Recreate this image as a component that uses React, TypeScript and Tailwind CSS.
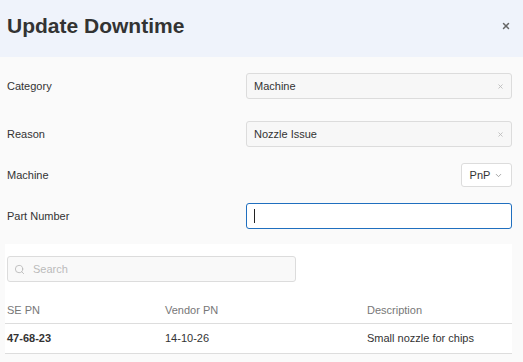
import React from "react";
import { X, Search, ChevronDown } from "lucide-react";

const font = { fontFamily: '"Liberation Sans", Arial, sans-serif' };

const Row: React.FC<{ label: string; children: React.ReactNode; h: string }> = ({ label, children, h }) => (
  <div className={`flex items-center ${h}`}>
    <div className="w-[239px] pl-[7px] text-[11px] text-[#333]">{label}</div>
    <div className="flex-1 flex justify-end pr-[11px]">{children}</div>
  </div>
);

const App: React.FC = () => {
  return (
    <div className="w-[523px] h-[362px] bg-[#fafafa] overflow-hidden" style={font}>
      {/* Header */}
      <div className="h-[57px] bg-[#eff3fb] flex items-center justify-between pl-[7px] pr-[12px]">
        <h1 className="text-[21px] font-bold text-[#333] -mt-[6px]">Update Downtime</h1>
        <X className="w-[10px] h-[10px] text-[#666] -mt-[6px]" strokeWidth={3.5} />
      </div>

      {/* Form */}
      <div className="pt-[16px]">
        <Row label="Category" h="h-[26px]">
          <div className="w-[266px] h-[26px] bg-[#f7f7f7] border border-[#dcdcdc] rounded-[3px] flex items-center justify-between px-[7px] text-[11px] text-[#333]">
            <span>Machine</span>
            <X className="w-[7px] h-[7px] text-[#bbb]" strokeWidth={3} />
          </div>
        </Row>
        <div className="h-[22px]" />
        <Row label="Reason" h="h-[26px]">
          <div className="w-[266px] h-[26px] bg-[#f7f7f7] border border-[#dcdcdc] rounded-[3px] flex items-center justify-between px-[7px] text-[11px] text-[#333]">
            <span>Nozzle Issue</span>
            <X className="w-[7px] h-[7px] text-[#bbb]" strokeWidth={3} />
          </div>
        </Row>
        <div className="h-[16px]" />
        <Row label="Machine" h="h-[24px]">
          <div className="w-[51px] h-[24px] bg-white border border-[#dcdcdc] rounded-[3px] flex items-center justify-center gap-[4px] text-[11px] text-[#333]">
            <span>PnP</span>
            <ChevronDown className="w-[9px] h-[9px] text-[#888]" strokeWidth={2} />
          </div>
        </Row>
        <div className="h-[16px]" />
        <Row label="Part Number" h="h-[26px]">
          <div className="w-[266px] h-[26px] bg-white border border-[#1f6fbf] rounded-[3px] flex items-center px-[7px]">
            <div className="w-px h-[14px] bg-[#222]" />
          </div>
        </Row>
      </div>

      {/* Table area */}
      <div className="mt-[15px] mx-[5px] w-[507px] bg-white pt-[12px]">
        <div className="ml-[2px] w-[289px] h-[26px] bg-[#f9f9f9] border border-[#dcdcdc] rounded-[3px] flex items-center gap-[8px] px-[6px]">
          <Search className="w-[11px] h-[11px] text-[#bbb]" strokeWidth={2} />
          <span className="text-[11px] text-[#bbb]">Search</span>
        </div>
        <div className="mt-[15px]">
          <div className="h-[27px] flex items-center border-b border-[#dddddd] text-[11px] text-[#777]">
            <div className="w-[160px] pl-[2px]">SE PN</div>
            <div className="w-[202px]">Vendor PN</div>
            <div>Description</div>
          </div>
          <div className="h-[30px] flex items-center border-b border-[#dddddd] text-[11px] text-[#333]">
            <div className="w-[160px] pl-[2px] font-bold">47-68-23</div>
            <div className="w-[202px]">14-10-26</div>
            <div>Small nozzle for chips</div>
          </div>
        </div>
      </div>
    </div>
  );
};

export default App;
